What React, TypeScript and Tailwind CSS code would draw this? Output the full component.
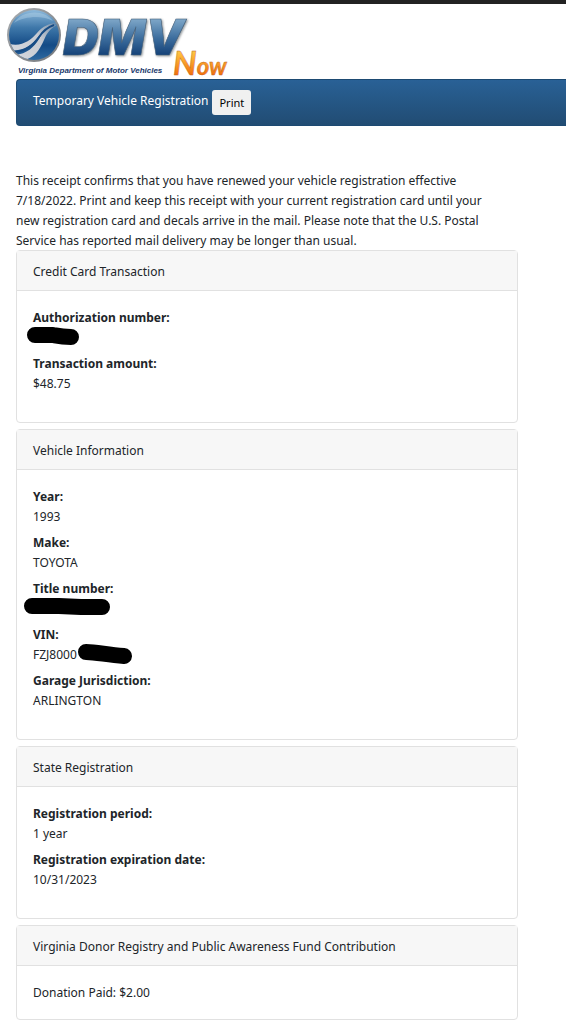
import type { ReactNode } from "react";

function Logo() {
  return (
    <svg
      width="240"
      height="75"
      viewBox="0 4 240 75"
      role="img"
      aria-label="DMV Now, Virginia Department of Motor Vehicles"
      className="block overflow-visible"
    >
      <defs>
        <linearGradient id="globe" x1="0" y1="0" x2="0" y2="1">
          <stop offset="0" stopColor="#8db9db" />
          <stop offset="0.35" stopColor="#3f78aa" />
          <stop offset="0.7" stopColor="#144b86" />
          <stop offset="1" stopColor="#2e69a0" />
        </linearGradient>
        <linearGradient id="ring" x1="0" y1="0" x2="1" y2="1">
          <stop offset="0" stopColor="#a9adb1" />
          <stop offset="1" stopColor="#74777b" />
        </linearGradient>
        <linearGradient id="swoosh" gradientUnits="userSpaceOnUse" x1="10" y1="55" x2="58" y2="24">
          <stop offset="0" stopColor="#d6d9df" />
          <stop offset="0.6" stopColor="#c6cad1" />
          <stop offset="1" stopColor="#6c8aa8" />
        </linearGradient>
        <linearGradient id="steel" gradientUnits="userSpaceOnUse" x1="0" y1="20" x2="0" y2="56">
          <stop offset="0" stopColor="#7ba4c6" />
          <stop offset="0.5" stopColor="#3d6e9e" />
          <stop offset="1" stopColor="#123f76" />
        </linearGradient>
        <linearGradient id="flame" gradientUnits="userSpaceOnUse" x1="0" y1="46" x2="0" y2="76">
          <stop offset="0" stopColor="#ffd94f" />
          <stop offset="0.5" stopColor="#fba52b" />
          <stop offset="1" stopColor="#ef6a0c" />
        </linearGradient>
        <clipPath id="disc">
          <circle cx="34" cy="35" r="25" />
        </clipPath>
      </defs>

      <circle cx="34" cy="35" r="27" fill="url(#ring)" />
      <circle cx="34" cy="35" r="25" fill="url(#globe)" />
      <g clipPath="url(#disc)">
        <path d="M7 43 C20 48 30 41 37 33 C43 26 49 23 59 23 C50 25 45 29 39 36 C31 46 22 52 10 50 Z" fill="url(#swoosh)" />
        <path d="M15 55 C27 54 34 47 39 39 C44 30 49 26 59 24 C50 28 47 33 44 40 C39 51 34 58 24 60 Z" fill="url(#swoosh)" />
        <path d="M12 52 C25 52 33 46 39 37 C43 31 48 27 54 25" fill="none" stroke="#174c85" strokeWidth="2" />
        <path d="M14 23 C22 10 44 9 53 21 C42 15 25 16 14 23 Z" fill="#b8d7eb" opacity="0.4" />
      </g>

      <text
        x="63"
        y="55"
        fill="url(#steel)"
        stroke="#45617c"
        strokeWidth="0.6"
        fontFamily="Inter, sans-serif"
        fontSize="49"
        fontWeight="900"
        fontStyle="italic"
        className="drop-shadow-[1px_1px_1px_#8f9497]"
      >
        DMV
      </text>
      <text
        x="18"
        y="73"
        fill="#18386b"
        fontFamily="Liberation Sans, sans-serif"
        fontSize="8"
        fontWeight="700"
        fontStyle="italic"
      >
        Virginia Department of Motor Vehicles
      </text>
      <text
        x="173"
        y="75"
        fill="url(#flame)"
        stroke="#b9632a"
        strokeWidth="0.4"
        fontFamily="Lato, sans-serif"
        fontWeight="700"
        fontStyle="italic"
      >
        <tspan fontSize="33">N</tspan>
        <tspan fontSize="24">ow</tspan>
      </text>
    </svg>
  );
}

function Card({ title, children }: { title: string; children: ReactNode }) {
  return (
    <section className="rounded border border-[#e1e1e1] bg-white">
      <h2 className="border-b border-[#e1e1e1] bg-[#f7f7f7] px-4 pt-[11px] pb-2">{title}</h2>
      {children}
    </section>
  );
}

function Details({ children }: { children: ReactNode }) {
  return <dl className="flex flex-col gap-[6px] px-4 pt-[17px] pb-7">{children}</dl>;
}

function Field({ label, children }: { label: string; children: ReactNode }) {
  return (
    <div>
      <dt className="font-bold">{label}</dt>
      <dd className="relative h-5">{children}</dd>
    </div>
  );
}

function Redaction({ className, d }: { className: string; d: string }) {
  return (
    <svg width="96" height="24" viewBox="0 0 96 24" aria-hidden="true" className={`absolute -top-[5px] ${className}`}>
      <path d={d} fill="none" stroke="#000" strokeWidth="16" strokeLinecap="round" strokeLinejoin="round" />
    </svg>
  );
}

export default function App() {
  return (
    <div className="min-h-screen border-t-4 border-[#222222] bg-white pb-2 font-['Noto_Sans','Open_Sans',sans-serif] text-[12px] leading-5 text-[#212529]">
      <header>
        <Logo />
        <div className="ml-4 flex items-start gap-1 rounded-l border border-r-0 border-[#1d4a72] bg-linear-to-b from-[#296196] to-[#214c73] px-4 pt-[10px] pb-[10px] text-white">
          <h1 className="pt-px">Temporary Vehicle Registration</h1>
          <button
            type="button"
            className="h-[25px] rounded-[3px] bg-[#f0f0f0] px-[7px] text-[11px] text-black"
            onClick={() => window.print()}
          >
            Print
          </button>
        </div>
      </header>

      <main className="mr-12 ml-4 pt-[45px]">
        <p className="-mb-px pr-4">
          This receipt confirms that you have renewed your vehicle registration effective 7/18/2022. Print and keep
          this receipt with your current registration card until your new registration card and decals arrive in the
          mail. Please note that the U.S. Postal Service has reported mail delivery may be longer than usual.
        </p>

        <div className="flex flex-col gap-[6px]">
          <Card title="Credit Card Transaction">
            <Details>
              <Field label="Authorization number:">
                <Redaction className="-left-2" d="M10 12 L28 12 C33 13 36 14 46 14" />
              </Field>
              <Field label="Transaction amount:">$48.75</Field>
            </Details>
          </Card>

          <Card title="Vehicle Information">
            <Details>
              <Field label="Year:">1993</Field>
              <Field label="Make:">TOYOTA</Field>
              <Field label="Title number:">
                <Redaction className="-left-3" d="M11 12 L38 12 L60 13 L81 13" />
              </Field>
              <Field label="VIN:">
                FZJ8000
                <Redaction className="left-10" d="M13 12 C24 12 34 15 51 16" />
              </Field>
              <Field label="Garage Jurisdiction:">ARLINGTON</Field>
            </Details>
          </Card>

          <Card title="State Registration">
            <Details>
              <Field label="Registration period:">1 year</Field>
              <Field label="Registration expiration date:">10/31/2023</Field>
            </Details>
          </Card>

          <Card title="Virginia Donor Registry and Public Awareness Fund Contribution">
            <p className="px-4 pt-[17px] pb-4">Donation Paid: $2.00</p>
          </Card>
        </div>
      </main>
    </div>
  );
}
